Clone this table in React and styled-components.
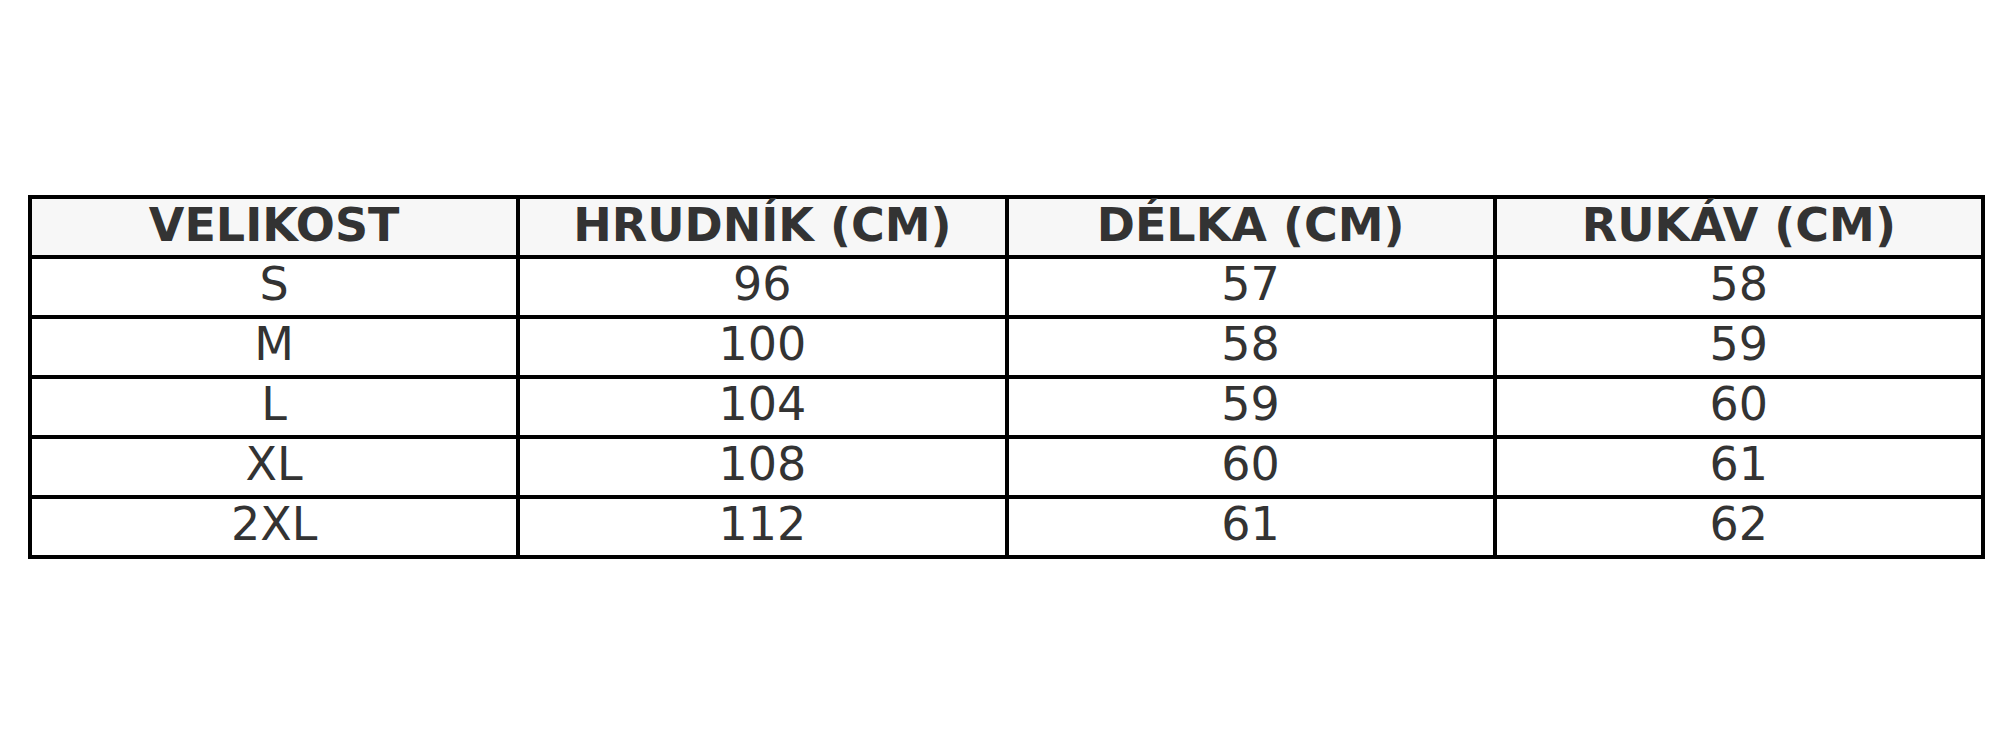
import styled, { createGlobalStyle } from "styled-components";

const GlobalStyle = createGlobalStyle`
  html, body {
    margin: 0;
    padding: 0;
    background: #fff;
  }
  body {
    font-family: "DejaVu Sans", "Liberation Sans", sans-serif;
  }
`

const Page = styled.main`
  min-height: 100vh;
  display: flex;
  align-items: center;
  justify-content: center;
  padding: 0 28px;
  box-sizing: border-box;
`

const Table = styled.div`
  width: 100%;
  display: grid;
  grid-template-columns: repeat(4, 1fr);
  grid-auto-rows: 56px;
  gap: 4px;
  padding: 4px;
  background: #000;
  box-sizing: border-box;
`

const Cell = styled.div`
  display: flex;
  align-items: center;
  justify-content: center;
  padding-bottom: ${p => (p.$head ? "4px" : "5px")};
  box-sizing: border-box;
  background: ${p => (p.$head ? "#f7f7f7" : "#fff")};
  color: #333;
  font-size: 46px;
  line-height: 1;
  font-weight: ${p => (p.$head ? 700 : 400)};
  text-transform: ${p => (p.$head ? "uppercase" : "none")};
  white-space: nowrap;
`

const headers = ["Velikost", "Hrudník (cm)", "Délka (cm)", "Rukáv (cm)"];

const rows = [
  ["S", "96", "57", "58"],
  ["M", "100", "58", "59"],
  ["L", "104", "59", "60"],
  ["XL", "108", "60", "61"],
  ["2XL", "112", "61", "62"],
];

const App = () => {
  return (
    <>
      <GlobalStyle />
      <Page>
        <Table role="table">
          {headers.map(h => (
            <Cell key={h} $head role="columnheader">{h}</Cell>
          ))}
          {rows.map(row =>
            row.map((v, i) => (
              <Cell key={row[0] + i} role="cell">{v}</Cell>
            ))
          )}
        </Table>
      </Page>
    </>
  )
}

export default App
